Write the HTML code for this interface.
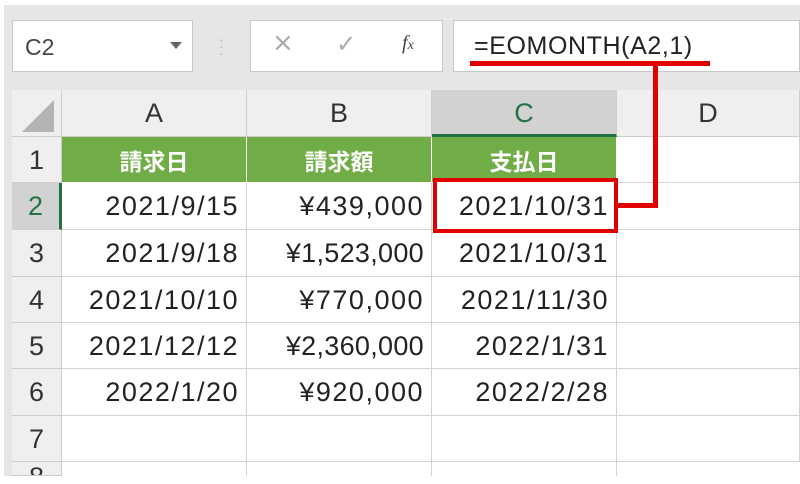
<!DOCTYPE html><html><head><style>
body{margin:0;width:800px;height:484px;background:#fff;position:relative;overflow:hidden;font-family:"Liberation Sans","Noto Sans CJK JP",sans-serif}
.a{position:absolute}
.bar{left:4px;top:5px;width:796px;height:472px;background:#e6e6e6}
.box{background:#fff;border:1px solid #c8c8c8;box-sizing:border-box}
.c{position:absolute;box-sizing:border-box;border-right:1px solid #d4d4d4;border-bottom:1px solid #d4d4d4;font-size:27px;color:#222;line-height:46px;letter-spacing:1.5px}
.h{background:#efefef;color:#333;text-align:center;border-color:#cdcdcd;letter-spacing:0}
.r{text-align:right;padding-right:7px;background:#fff}
.g{background:#70ad47;color:#fff;font-weight:bold;text-align:center;font-family:"Noto Sans CJK JP",sans-serif;font-size:23px;letter-spacing:0;border-color:#70ad47 #fff #fff #70ad47}
.red{background:#e00000;position:absolute}
</style></head><body>
<div class="a bar"></div>
<div class="a box" style="left:12px;top:20px;width:181px;height:52px;font-size:23px;color:#444;line-height:52px;padding-left:12px">C2</div>
<div class="a" style="left:170px;top:42px;width:0;height:0;border-left:6px solid transparent;border-right:6px solid transparent;border-top:7px solid #666"></div>
<div class="a" style="left:219px;top:36px;color:#aaa;font-size:14px;line-height:7px">·<br>·<br>·</div>
<div class="a box" style="left:250px;top:20px;width:193px;height:52px"></div>
<div class="a" style="left:272px;top:28px;font-size:26px;color:#aaa;font-family:'DejaVu Sans'">×</div>
<div class="a" style="left:336px;top:30px;font-size:24px;color:#aaa;font-family:'DejaVu Sans'">✓</div>
<div class="a" style="left:402px;top:32px;font-size:20px;color:#444;font-style:italic;font-family:'Liberation Serif'"><i>f</i><span style="font-size:14px">x</span></div>
<div class="a box" style="left:453px;top:20px;width:347px;height:52px;font-size:25px;letter-spacing:0.6px;color:#222;line-height:50px;padding-left:20px">=EOMONTH(A2,1)</div>
<div class="a" style="left:12px;top:90px;width:788px;height:386px;background:#fff"></div>
<div class="c h" style="left:12px;top:90px;width:50px;height:47px"></div>
<div class="a" style="left:22px;top:100px;width:0;height:0;border-left:32px solid transparent;border-bottom:32px solid #b4b4b4"></div>
<div class="c h" style="left:62px;top:90px;width:185px;height:47px">A</div>
<div class="c h" style="left:247px;top:90px;width:185px;height:47px">B</div>
<div class="c h" style="left:432px;top:90px;width:185px;height:47px;background:#d2d2d2;border-bottom:3px solid #217346;color:#217346">C</div>
<div class="c h" style="left:617px;top:90px;width:183px;height:47px">D</div>
<div class="c h" style="left:12px;top:137px;width:50px;height:46px">1</div>
<div class="c h" style="left:12px;top:183px;width:50px;height:47px;background:#d2d2d2;color:#217346;border-right:3px solid #217346">2</div>
<div class="c h" style="left:12px;top:230px;width:50px;height:47px">3</div>
<div class="c h" style="left:12px;top:277px;width:50px;height:46px">4</div>
<div class="c h" style="left:12px;top:323px;width:50px;height:46px">5</div>
<div class="c h" style="left:12px;top:369px;width:50px;height:47px">6</div>
<div class="c h" style="left:12px;top:416px;width:50px;height:46px">7</div>
<div class="c h" style="left:12px;top:462px;width:50px;height:14px;line-height:30px;overflow:hidden">8</div>
<div class="c g" style="left:62px;top:137px;width:185px;height:46px">請求日</div>
<div class="c g" style="left:247px;top:137px;width:185px;height:46px">請求額</div>
<div class="c g" style="left:432px;top:137px;width:185px;height:46px">支払日</div>
<div class="c" style="left:617px;top:137px;width:183px;height:46px"></div>
<div class="c r" style="left:62px;top:183px;width:185px;height:47px">2021/9/15</div>
<div class="c r" style="left:247px;top:183px;width:185px;height:47px">¥439,000</div>
<div class="c r" style="left:432px;top:183px;width:185px;height:47px">2021/10/31</div>
<div class="c" style="left:617px;top:183px;width:183px;height:47px"></div>
<div class="c r" style="left:62px;top:230px;width:185px;height:47px">2021/9/18</div>
<div class="c r" style="left:247px;top:230px;width:185px;height:47px;letter-spacing:0.3px">¥1,523,000</div>
<div class="c r" style="left:432px;top:230px;width:185px;height:47px">2021/10/31</div>
<div class="c" style="left:617px;top:230px;width:183px;height:47px"></div>
<div class="c r" style="left:62px;top:277px;width:185px;height:46px">2021/10/10</div>
<div class="c r" style="left:247px;top:277px;width:185px;height:46px">¥770,000</div>
<div class="c r" style="left:432px;top:277px;width:185px;height:46px">2021/11/30</div>
<div class="c" style="left:617px;top:277px;width:183px;height:46px"></div>
<div class="c r" style="left:62px;top:323px;width:185px;height:46px">2021/12/12</div>
<div class="c r" style="left:247px;top:323px;width:185px;height:46px;letter-spacing:0.3px">¥2,360,000</div>
<div class="c r" style="left:432px;top:323px;width:185px;height:46px">2022/1/31</div>
<div class="c" style="left:617px;top:323px;width:183px;height:46px"></div>
<div class="c r" style="left:62px;top:369px;width:185px;height:47px">2022/1/20</div>
<div class="c r" style="left:247px;top:369px;width:185px;height:47px">¥920,000</div>
<div class="c r" style="left:432px;top:369px;width:185px;height:47px">2022/2/28</div>
<div class="c" style="left:617px;top:369px;width:183px;height:47px"></div>
<div class="c" style="left:62px;top:416px;width:185px;height:46px"></div>
<div class="c" style="left:247px;top:416px;width:185px;height:46px"></div>
<div class="c" style="left:432px;top:416px;width:185px;height:46px"></div>
<div class="c" style="left:617px;top:416px;width:183px;height:46px"></div>
<div class="c" style="left:62px;top:462px;width:185px;height:14px;border-bottom:0"></div>
<div class="c" style="left:247px;top:462px;width:185px;height:14px;border-bottom:0"></div>
<div class="c" style="left:432px;top:462px;width:185px;height:14px;border-bottom:0"></div>
<div class="a" style="left:0;top:476px;width:800px;height:8px;background:#fff"></div>
<div class="red" style="left:470px;top:61px;width:240px;height:5px"></div>
<div class="red" style="left:653px;top:61px;width:5px;height:147px"></div>
<div class="red" style="left:615px;top:203px;width:43px;height:5px"></div>
<div class="a" style="left:433px;top:178px;width:185px;height:55px;border:4px solid #e00000;box-sizing:border-box"></div>
</body></html>
